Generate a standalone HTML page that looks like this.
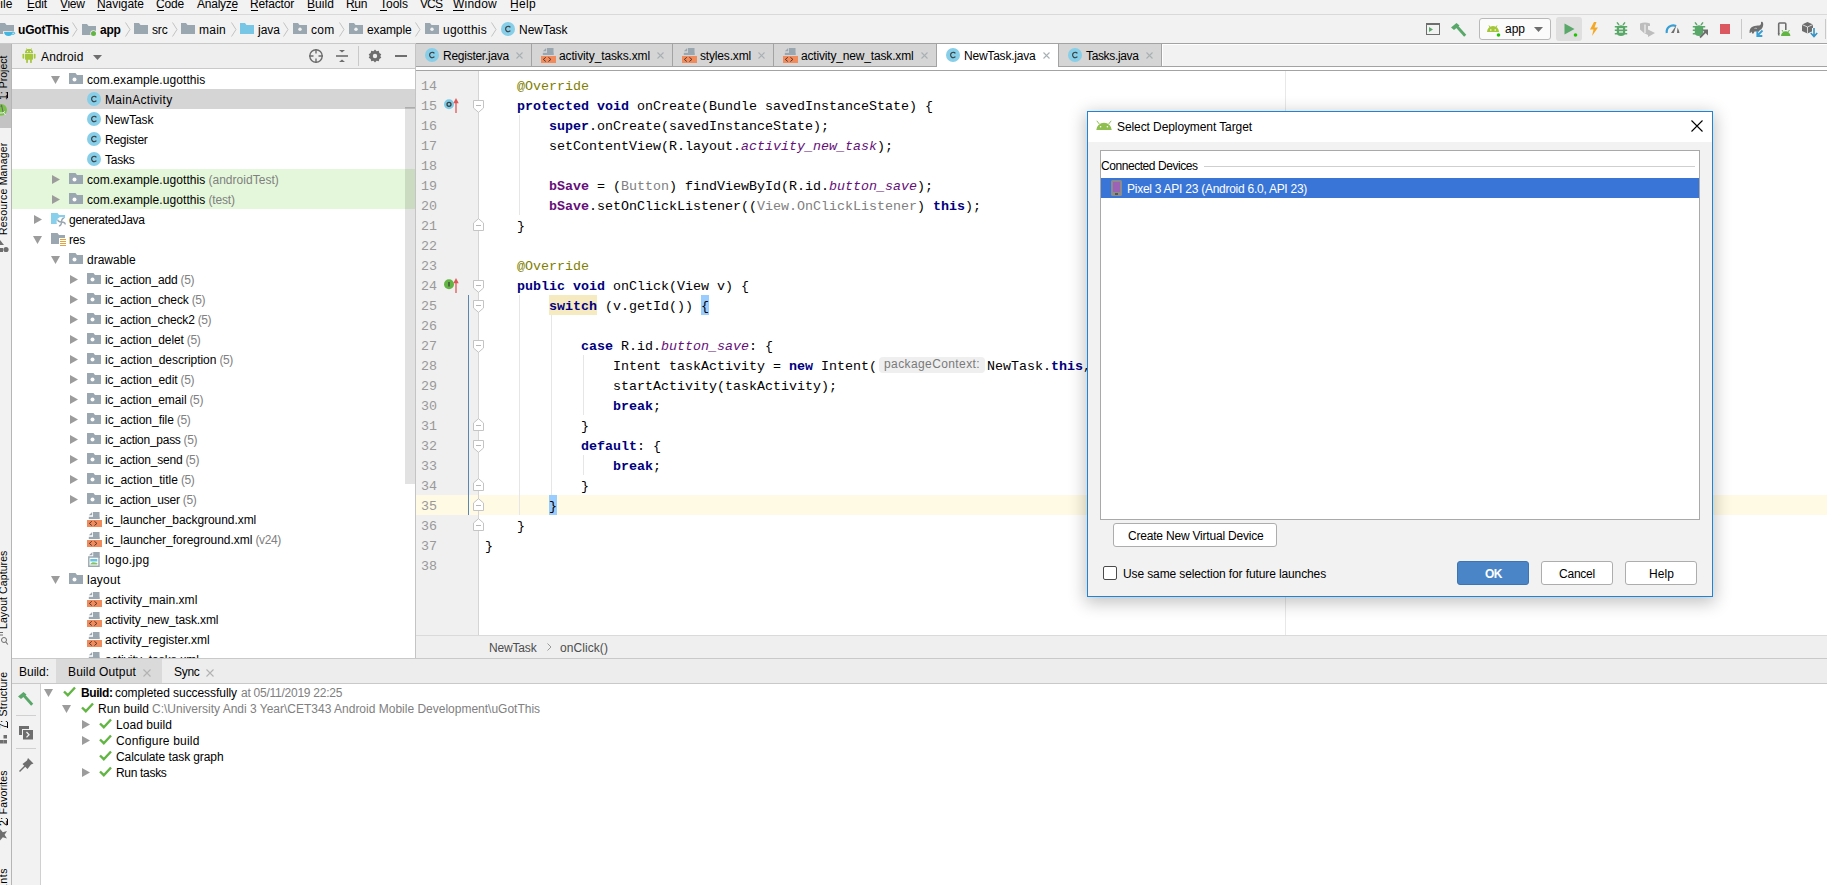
<!DOCTYPE html><html><head><meta charset="utf-8"><style>
*{margin:0;padding:0;box-sizing:border-box}
html,body{width:1827px;height:885px;overflow:hidden;background:#f2f2f2}
body{position:relative;font-family:"Liberation Sans",sans-serif;font-size:12px}
.t{position:absolute;white-space:pre;line-height:20px;font-size:12px}
.r{position:absolute}
.s{position:absolute;overflow:visible}
.code{position:absolute;font-family:"Liberation Mono",monospace;font-size:13.333px;line-height:20px;white-space:pre;color:#000}
</style></head><body><div class="r" style="left:0px;top:0px;width:1827px;height:14px;background:#f2f2f2;"></div><div class="r" style="left:0px;top:14px;width:1827px;height:1px;background:#d9d9d9;"></div><div class="t" style="left:-7px;top:-6px;color:#000;">File</div><div class="t" style="left:27px;top:-6px;color:#000;letter-spacing:-0.168px;">Edit</div><div class="t" style="left:60px;top:-6px;color:#000;letter-spacing:-0.324px;">View</div><div class="t" style="left:97px;top:-6px;color:#000;letter-spacing:-0.045px;">Navigate</div><div class="t" style="left:156px;top:-6px;color:#000;letter-spacing:-0.172px;">Code</div><div class="t" style="left:197px;top:-6px;color:#000;letter-spacing:-0.241px;">Analyze</div><div class="t" style="left:250px;top:-6px;color:#000;letter-spacing:-0.168px;">Refactor</div><div class="t" style="left:307px;top:-6px;color:#000;letter-spacing:0.062px;">Build</div><div class="t" style="left:346px;top:-6px;color:#000;letter-spacing:-0.339px;">Run</div><div class="t" style="left:380px;top:-6px;color:#000;letter-spacing:-0.003px;">Tools</div><div class="t" style="left:420px;top:-6px;color:#000;letter-spacing:-0.891px;">VCS</div><div class="t" style="left:453px;top:-6px;color:#000;letter-spacing:0.219px;">Window</div><div class="t" style="left:510px;top:-6px;color:#000;letter-spacing:0.328px;">Help</div><div class="r" style="left:27px;top:10px;width:6px;height:1px;background:#000;"></div><div class="r" style="left:61px;top:10px;width:7px;height:1px;background:#000;"></div><div class="r" style="left:97px;top:10px;width:8px;height:1px;background:#000;"></div><div class="r" style="left:157px;top:10px;width:7px;height:1px;background:#000;"></div><div class="r" style="left:231px;top:10px;width:6px;height:1px;background:#000;"></div><div class="r" style="left:251px;top:10px;width:7px;height:1px;background:#000;"></div><div class="r" style="left:308px;top:10px;width:7px;height:1px;background:#000;"></div><div class="r" style="left:351px;top:10px;width:6px;height:1px;background:#000;"></div><div class="r" style="left:380px;top:10px;width:7px;height:1px;background:#000;"></div><div class="r" style="left:436px;top:10px;width:7px;height:1px;background:#000;"></div><div class="r" style="left:453px;top:10px;width:11px;height:1px;background:#000;"></div><div class="r" style="left:511px;top:10px;width:7px;height:1px;background:#000;"></div><div class="r" style="left:0px;top:15px;width:1827px;height:28px;background:#f2f2f2;"></div><div class="r" style="left:0px;top:43px;width:1827px;height:1px;background:#c9c9c9;"></div><svg class="s" style="left:0px;top:23px;" width="16" height="14" viewBox="0 0 16 14"><path d="M0 0 H5 L6.5 2 H14 V11 H0 Z" fill="#9aa7b0"/><path d="M3 8.3 H15 V11 H13 Q12 13.5 9 13.5 H7 Q4 13.5 3 10 Z" fill="#f2f2f2"/><path d="M4 9 H12.5 Q12.5 13 8.5 13 Q4.5 13 4 9 Z" fill="#40b6e0"/><ellipse cx="13" cy="10.2" rx="1.8" ry="1.1" fill="none" stroke="#40b6e0" stroke-width="1"/></svg><div class="t" style="left:18px;top:20px;color:#000;font-weight:bold;letter-spacing:-0.205px;">uGotThis</div><svg class="s" style="left:72px;top:22px;" width="6" height="15" viewBox="0 0 6 15"><path d="M0.5 0.5 L5 7.5 L0.5 14.5" fill="none" stroke="#c3c3c3" stroke-width="1"/></svg><svg class="s" style="left:82px;top:24px;" width="16" height="14" viewBox="0 0 16 14"><path d="M0 0 H5 L6.5 2 H14 V11 H0 Z" fill="#9aa7b0"/><circle cx="11.5" cy="9.5" r="3.2" fill="#f2f2f2"/><circle cx="11.5" cy="9.5" r="2.5" fill="#62b543"/></svg><div class="t" style="left:100px;top:20px;color:#000;font-weight:bold;letter-spacing:-0.276px;">app</div><svg class="s" style="left:125px;top:22px;" width="6" height="15" viewBox="0 0 6 15"><path d="M0.5 0.5 L5 7.5 L0.5 14.5" fill="none" stroke="#c3c3c3" stroke-width="1"/></svg><svg class="s" style="left:134px;top:23px;" width="16" height="14" viewBox="0 0 16 14"><path d="M0 0 H5 L6.5 2 H14 V11 H0 Z" fill="#9aa7b0"/></svg><div class="t" style="left:152px;top:20px;color:#000;letter-spacing:-0.167px;">src</div><svg class="s" style="left:172px;top:22px;" width="6" height="15" viewBox="0 0 6 15"><path d="M0.5 0.5 L5 7.5 L0.5 14.5" fill="none" stroke="#c3c3c3" stroke-width="1"/></svg><svg class="s" style="left:181px;top:23px;" width="16" height="14" viewBox="0 0 16 14"><path d="M0 0 H5 L6.5 2 H14 V11 H0 Z" fill="#9aa7b0"/></svg><div class="t" style="left:199px;top:20px;color:#000;letter-spacing:0.246px;">main</div><svg class="s" style="left:231px;top:22px;" width="6" height="15" viewBox="0 0 6 15"><path d="M0.5 0.5 L5 7.5 L0.5 14.5" fill="none" stroke="#c3c3c3" stroke-width="1"/></svg><svg class="s" style="left:240px;top:23px;" width="16" height="14" viewBox="0 0 16 14"><path d="M0 0 H5 L6.5 2 H14 V11 H0 Z" fill="#78c6e6"/></svg><div class="t" style="left:258px;top:20px;color:#000;letter-spacing:-0.004px;">java</div><svg class="s" style="left:283px;top:22px;" width="6" height="15" viewBox="0 0 6 15"><path d="M0.5 0.5 L5 7.5 L0.5 14.5" fill="none" stroke="#c3c3c3" stroke-width="1"/></svg><svg class="s" style="left:293px;top:23px;" width="16" height="14" viewBox="0 0 16 14"><path d="M0 0 H5 L6.5 2 H14 V11 H0 Z" fill="#9aa7b0"/><circle cx="7" cy="6.3" r="1.7" fill="#f2f2f2"/></svg><div class="t" style="left:311px;top:20px;color:#000;letter-spacing:0.276px;">com</div><svg class="s" style="left:339px;top:22px;" width="6" height="15" viewBox="0 0 6 15"><path d="M0.5 0.5 L5 7.5 L0.5 14.5" fill="none" stroke="#c3c3c3" stroke-width="1"/></svg><svg class="s" style="left:349px;top:23px;" width="16" height="14" viewBox="0 0 16 14"><path d="M0 0 H5 L6.5 2 H14 V11 H0 Z" fill="#9aa7b0"/><circle cx="7" cy="6.3" r="1.7" fill="#f2f2f2"/></svg><div class="t" style="left:367px;top:20px;color:#000;letter-spacing:-0.123px;">example</div><svg class="s" style="left:415px;top:22px;" width="6" height="15" viewBox="0 0 6 15"><path d="M0.5 0.5 L5 7.5 L0.5 14.5" fill="none" stroke="#c3c3c3" stroke-width="1"/></svg><svg class="s" style="left:425px;top:23px;" width="16" height="14" viewBox="0 0 16 14"><path d="M0 0 H5 L6.5 2 H14 V11 H0 Z" fill="#9aa7b0"/><circle cx="7" cy="6.3" r="1.7" fill="#f2f2f2"/></svg><div class="t" style="left:443px;top:20px;color:#000;letter-spacing:0.248px;">ugotthis</div><svg class="s" style="left:491px;top:22px;" width="6" height="15" viewBox="0 0 6 15"><path d="M0.5 0.5 L5 7.5 L0.5 14.5" fill="none" stroke="#c3c3c3" stroke-width="1"/></svg><svg class="s" style="left:501px;top:22px;" width="14" height="14" viewBox="0 0 14 14"><circle cx="7" cy="7" r="7" fill="#87cee8"/><path d="M9.4 5.3 A2.7 2.7 0 1 0 9.4 8.7" fill="none" stroke="#3a4245" stroke-width="1.15"/></svg><div class="t" style="left:519px;top:20px;color:#000;letter-spacing:-0.027px;">NewTask</div><svg class="s" style="left:1426px;top:23px;" width="14" height="12" viewBox="0 0 14 12"><rect x="0.5" y="0.5" width="13" height="11" fill="none" stroke="#6e6e6e"/><rect x="0" y="0" width="14" height="2" fill="#6e6e6e"/><path d="M3 4 L7 6.5 L3 9 Z" fill="#59a869"/></svg><svg class="s" style="left:1450px;top:22px;" width="17" height="16" viewBox="0 0 17 16"><path d="M1 5.5 L6.5 1 L9.5 3.5 L4 8 Z" fill="#59a869"/><path d="M6 3.5 L15.2 13.8" stroke="#59a869" stroke-width="2.8"/></svg><div class="r" style="left:1479px;top:18px;width:72px;height:22px;background:#fbfbfb;border:1px solid #b9b9b9;border-radius:3px;"></div><svg class="s" style="left:1486px;top:24px;" width="14" height="13" viewBox="0 0 14 13"><path d="M1 8 A6 6 0 0 1 13 8 Z" fill="#a4c639"/><path d="M3 1.5 L4.5 4 M11 1.5 L9.5 4" stroke="#a4c639" stroke-width="1"/><circle cx="4.8" cy="6" r="0.8" fill="#fff"/><circle cx="9.2" cy="6" r="0.8" fill="#fff"/><circle cx="12.5" cy="11" r="2.2" fill="#fbfbfb"/><circle cx="12.5" cy="11" r="1.8" fill="#21c400"/></svg><div class="t" style="left:1505px;top:19px;color:#000;letter-spacing:-0.005px;">app</div><svg class="s" style="left:1534px;top:27px;" width="9" height="5" viewBox="0 0 9 5"><path d="M0 0 H9 L4.5 5 Z" fill="#6e6e6e"/></svg><div class="r" style="left:1556px;top:17px;width:26px;height:24px;background:#dfdfdf;border-radius:3px;"></div><svg class="s" style="left:1564px;top:23px;" width="14" height="14" viewBox="0 0 14 14"><path d="M0.5 0.5 L10.5 6 L0.5 11.5 Z" fill="#59a869"/><circle cx="11.5" cy="12" r="2.2" fill="#dfdfdf"/><circle cx="11.5" cy="12" r="1.8" fill="#21c400"/></svg><svg class="s" style="left:1589px;top:22px;" width="10" height="14" viewBox="0 0 10 14"><path d="M5 0 L1 7.5 H4.5 L3 14 L9 5.5 H5.5 L7.5 0 Z" fill="#f4a825"/></svg><svg class="s" style="left:1614px;top:22px;" width="14" height="14" viewBox="0 0 14 14"><path d="M3 0.3 L5 3 M11 0.3 L9 3" stroke="#59a869" stroke-width="1.4"/><path d="M2.8 5 Q7 1.5 11.2 5 V10.5 Q11 14 7 14 Q3 14 2.8 10.5 Z" fill="#59a869"/><path d="M0.8 4.8 H13.2 M0.8 8.3 H13.2 M0.8 11.8 H13.2" stroke="#59a869" stroke-width="1.5"/><rect x="5" y="6.2" width="4" height="1.3" fill="#f2f2f2"/><rect x="5" y="9.3" width="4" height="1.3" fill="#f2f2f2"/></svg><svg class="s" style="left:1640px;top:22px;" width="16" height="15" viewBox="0 0 16 15"><path d="M0 1.5 Q5 -0.5 10 1.5 V4 H8 V13 Q3 11 0 7.5 Z" fill="#bdbdbd"/><path d="M5 2.5 V11" stroke="#f2f2f2" stroke-width="1.2"/><path d="M8 7.5 L15 11 L8 15 Z" fill="#bdbdbd"/></svg><svg class="s" style="left:1665px;top:23px;" width="16" height="11" viewBox="0 0 16 11"><path d="M1.8 10 A6.5 6.5 0 0 1 11 3" fill="none" stroke="#389fd6" stroke-width="2.2"/><path d="M6 10 L11.5 2 L8.8 10 Z" fill="#6e6e6e"/><path d="M12.5 4.5 Q14 7 14.5 10 H12 Z" fill="#6e6e6e"/></svg><svg class="s" style="left:1692px;top:22px;" width="16" height="16" viewBox="0 0 16 16"><path d="M3 0.3 L5 3 M11 0.3 L9 3" stroke="#59a869" stroke-width="1.4"/><path d="M2.8 5 Q7 1.5 11.2 5 V10.5 Q11 14 7 14 Q3 14 2.8 10.5 Z" fill="#59a869"/><path d="M0.8 4.8 H13.2 M0.8 8.3 H10 M0.8 11.8 H6" stroke="#59a869" stroke-width="1.5"/><path d="M6.5 16 L14 8.5 L16 8.5 L16 16 Z" fill="#f2f2f2"/><path d="M8 15.5 L14.3 9.2" stroke="#6e6e6e" stroke-width="1.8"/><path d="M10 7.5 H16 V13.5 Z" fill="#6e6e6e"/></svg><div class="r" style="left:1720px;top:24px;width:10px;height:10px;background:#db5860;"></div><div class="r" style="left:1741px;top:19px;width:1px;height:20px;background:#c9c9c9;"></div><svg class="s" style="left:1749px;top:21px;" width="17" height="17" viewBox="0 0 17 17"><path d="M0.5 12 C0.3 8 2 6 4 5.5 C6 4.5 8.5 4.5 10 4.5 C11.5 4.5 12.3 3 12 1.5 C11.8 0.6 12.8 0.4 13.5 1 C14.6 2 14.4 4.5 13.5 6.5 C12.5 8.5 11 9.5 10.5 11 L9.5 12.5 H8 V10.5 H5.5 L4.5 12.5 H3 L3 10.5 C2.5 11 1.8 12 0.5 12 Z" fill="#6e6e6e"/><path d="M5.5 7.5 C6.5 7 7.5 7.2 8 7.8" stroke="#f2f2f2" stroke-width="0.6" fill="none"/><path d="M7.5 15.5 L13 10" stroke="#f2f2f2" stroke-width="4"/><path d="M8.5 14.5 L13.5 9.5 M8.3 10 V15 H13.3" fill="none" stroke="#389fd6" stroke-width="1.8"/></svg><svg class="s" style="left:1777px;top:22px;" width="15" height="15" viewBox="0 0 15 15"><path d="M1.7 12 V2 Q1.7 1 2.7 1 H7.8 Q8.8 1 8.8 2 V8" fill="none" stroke="#6e6e6e" stroke-width="1.6"/><path d="M1.7 11 V12.5 Q1.7 13 2.5 13" fill="none" stroke="#6e6e6e" stroke-width="1.6"/><path d="M3.5 14.5 A5.2 5.2 0 0 1 13.9 14.5 Z" fill="#f2f2f2" stroke="#f2f2f2" stroke-width="1.5"/><path d="M4 14 A4.7 4.7 0 0 1 13.4 14 Z" fill="#62b543"/><path d="M5 8 L6 9.8 M12.4 8 L11.4 9.8" stroke="#62b543" stroke-width="1"/></svg><svg class="s" style="left:1802px;top:22px;" width="16" height="16" viewBox="0 0 16 16"><path d="M5.5 0 L11 2.5 V9 L5.5 11.5 L0 9 V2.5 Z" fill="#6e6e6e"/><path d="M0 2.5 L5.5 5 L11 2.5 M5.5 5 V11.5" stroke="#f2f2f2" stroke-width="0.8" fill="none"/><path d="M12 6 V14" stroke="#f2f2f2" stroke-width="4"/><path d="M12 6 V14 M8.8 11 L12 14.5 L15.2 11" fill="none" stroke="#3592c4" stroke-width="1.6"/></svg><div class="r" style="left:1825px;top:19px;width:1px;height:20px;background:#c9c9c9;"></div><div class="r" style="left:0px;top:44px;width:11px;height:841px;background:#f2f2f2;"></div><div class="r" style="left:11px;top:44px;width:1px;height:841px;background:#b5b5b5;"></div><div class="r" style="left:0px;top:44px;width:11px;height:84px;background:#c3c3c3;"></div><div class="t" style="left:-4px;top:100px;font-size:10.5px;line-height:14px;color:#000;transform-origin:0 0;transform:rotate(-90deg);letter-spacing:0.013px;">1: Project</div><div class="r" style="left:7px;top:92px;width:1px;height:6px;background:#000;"></div><svg class="s" style="left:0px;top:103px;" width="8" height="14" viewBox="0 0 8 14"><circle cx="1.2" cy="6.8" r="5.8" fill="#78c247"/><path d="M1 4 L1.5 2 L2 4 L3 9" stroke="#6a6a6a" stroke-width="1.1" fill="none"/><path d="M0 10 Q3 10.5 5 8.5 M3.5 9.5 L5.5 12" stroke="#f0f0f0" stroke-width="1" fill="none"/></svg><div class="t" style="left:-4px;top:235px;font-size:10.5px;line-height:14px;color:#000;transform-origin:0 0;transform:rotate(-90deg);letter-spacing:0.197px;">Resource Manager</div><svg class="s" style="left:0px;top:240px;" width="9" height="13" viewBox="0 0 9 13"><path d="M0 0 L4 5 H0 Z" fill="#6e6e6e"/><circle cx="6" cy="9.5" r="2.6" fill="#6e6e6e"/><rect x="0" y="8" width="3" height="4" fill="#6e6e6e"/></svg><div class="t" style="left:-4px;top:629px;font-size:10.5px;line-height:14px;color:#000;transform-origin:0 0;transform:rotate(-90deg);letter-spacing:0.094px;">Layout Captures</div><svg class="s" style="left:0px;top:632px;" width="8" height="13" viewBox="0 0 8 13"><path d="M0 0.5 H3 M0 3 H3" stroke="#6e6e6e" stroke-width="1"/><circle cx="4" cy="8" r="2.5" fill="none" stroke="#6e6e6e" stroke-width="1"/><path d="M5.8 10 L7.8 12.5" stroke="#6e6e6e" stroke-width="1.2"/></svg><div class="t" style="left:-4px;top:729px;font-size:10.5px;line-height:14px;color:#000;transform-origin:0 0;transform:rotate(-90deg);letter-spacing:0.266px;">7: Structure</div><div class="r" style="left:7px;top:722px;width:1px;height:6px;background:#000;"></div><svg class="s" style="left:0px;top:735px;" width="8" height="9" viewBox="0 0 8 9"><rect x="3.5" y="0" width="3.5" height="3.5" fill="#6e6e6e"/><rect x="0" y="5" width="3.5" height="3.5" fill="#6e6e6e"/><rect x="3.5" y="5" width="3.5" height="3.5" fill="#6e6e6e"/></svg><div class="t" style="left:-4px;top:826px;font-size:10.5px;line-height:14px;color:#000;transform-origin:0 0;transform:rotate(-90deg);letter-spacing:0.052px;">2: Favorites</div><div class="r" style="left:7px;top:819px;width:1px;height:6px;background:#000;"></div><svg class="s" style="left:-4px;top:829px;" width="12" height="12" viewBox="0 0 12 12"><path d="M5.8 0 L7.4 4 L11.6 4.1 L8.3 6.8 L9.5 11 L5.8 8.6 L2.1 11 L3.3 6.8 L0 4.1 L4.2 4 Z" transform="rotate(-90 5.8 5.8)" fill="#6e6e6e"/></svg><div class="t" style="left:-4px;top:940px;font-size:10.5px;line-height:14px;color:#000;transform-origin:0 0;transform:rotate(-90deg);letter-spacing:0.570px;">Build Variants</div><div class="r" style="left:12px;top:44px;width:403px;height:24px;background:#eeeeee;"></div><div class="r" style="left:12px;top:68px;width:403px;height:1px;background:#c9c9c9;"></div><div class="r" style="left:415px;top:44px;width:1px;height:615px;background:#c4c4c4;"></div><div class="r" style="left:12px;top:69px;width:403px;height:589px;background:#ffffff;"></div><svg class="s" style="left:22px;top:48px;" width="14" height="15" viewBox="0 0 14 15"><path d="M3 5 A4 4 0 0 1 11 5 Z" fill="#a4c639"/><path d="M4.5 0.5 L5.3 2.2 M9.5 0.5 L8.7 2.2" stroke="#a4c639" stroke-width="0.9"/><circle cx="5.6" cy="3.6" r="0.6" fill="#fff"/><circle cx="8.4" cy="3.6" r="0.6" fill="#fff"/><rect x="3" y="5.7" width="8" height="6" rx="0.6" fill="#a4c639"/><rect x="0.5" y="5.7" width="1.7" height="5" rx="0.85" fill="#a4c639"/><rect x="11.8" y="5.7" width="1.7" height="5" rx="0.85" fill="#a4c639"/><rect x="4.2" y="11" width="1.7" height="4" rx="0.85" fill="#a4c639"/><rect x="8.1" y="11" width="1.7" height="4" rx="0.85" fill="#a4c639"/></svg><div class="t" style="left:41px;top:47px;color:#000;letter-spacing:0.163px;">Android</div><svg class="s" style="left:93px;top:55px;" width="9" height="5" viewBox="0 0 9 5"><path d="M0 0 H9 L4.5 5 Z" fill="#6e6e6e"/></svg><svg class="s" style="left:309px;top:49px;" width="14" height="14" viewBox="0 0 14 14"><circle cx="7" cy="7" r="6.2" fill="none" stroke="#6e6e6e" stroke-width="1.4"/><path d="M7 0 V4.5 M7 9.5 V14 M0 7 H4.5 M9.5 7 H14" stroke="#6e6e6e" stroke-width="1.4"/></svg><svg class="s" style="left:336px;top:50px;" width="12" height="12" viewBox="0 0 12 12"><path d="M3 0 H9 L6 2.5 Z M3 12 H9 L6 9.5 Z" fill="#6e6e6e"/><rect x="0" y="5.2" width="12" height="1.6" fill="#6e6e6e"/></svg><div class="r" style="left:358px;top:46px;width:1px;height:20px;background:#c9c9c9;"></div><svg class="s" style="left:368px;top:49px;" width="14" height="14" viewBox="0 0 14 14"><path d="M7 0.5 L8.6 2.2 L10.8 1.8 L11.3 4 L13.3 5.2 L12.3 7 L13.3 8.8 L11.3 10 L10.8 12.2 L8.6 11.8 L7 13.5 L5.4 11.8 L3.2 12.2 L2.7 10 L0.7 8.8 L1.7 7 L0.7 5.2 L2.7 4 L3.2 1.8 L5.4 2.2 Z" fill="#6e6e6e"/><circle cx="7" cy="7" r="2.2" fill="#eeeeee"/></svg><div class="r" style="left:395px;top:55px;width:12px;height:2px;background:#6e6e6e;"></div><svg class="s" style="left:51px;top:76px;" width="9" height="8" viewBox="0 0 9 8"><path d="M0 0 H9 L4.5 8 Z" fill="#9c9c9c"/></svg><svg class="s" style="left:69px;top:73px;" width="14" height="11" viewBox="0 0 14 11"><path d="M0 0 H6.5 L8 2 H14 V11 H0 Z" fill="#9aa7b0"/><circle cx="5.5" cy="6.5" r="2" fill="#fff"/></svg><div class="t" style="left:87px;top:70px;color:#000;letter-spacing:0.085px;">com.example.ugotthis</div><div class="r" style="left:12px;top:89px;width:403px;height:20px;background:#d5d5d5;"></div><svg class="s" style="left:87px;top:92px;" width="14" height="14" viewBox="0 0 14 14"><circle cx="7" cy="7" r="7" fill="#87cee8"/><path d="M9.4 5.3 A2.7 2.7 0 1 0 9.4 8.7" fill="none" stroke="#3a4245" stroke-width="1.15"/></svg><div class="t" style="left:105px;top:90px;color:#000;letter-spacing:0.290px;">MainActivity</div><svg class="s" style="left:87px;top:112px;" width="14" height="14" viewBox="0 0 14 14"><circle cx="7" cy="7" r="7" fill="#87cee8"/><path d="M9.4 5.3 A2.7 2.7 0 1 0 9.4 8.7" fill="none" stroke="#3a4245" stroke-width="1.15"/></svg><div class="t" style="left:105px;top:110px;color:#000;letter-spacing:-0.012px;">NewTask</div><svg class="s" style="left:87px;top:132px;" width="14" height="14" viewBox="0 0 14 14"><circle cx="7" cy="7" r="7" fill="#87cee8"/><path d="M9.4 5.3 A2.7 2.7 0 1 0 9.4 8.7" fill="none" stroke="#3a4245" stroke-width="1.15"/></svg><div class="t" style="left:105px;top:130px;color:#000;letter-spacing:-0.261px;">Register</div><svg class="s" style="left:87px;top:152px;" width="14" height="14" viewBox="0 0 14 14"><circle cx="7" cy="7" r="7" fill="#87cee8"/><path d="M9.4 5.3 A2.7 2.7 0 1 0 9.4 8.7" fill="none" stroke="#3a4245" stroke-width="1.15"/></svg><div class="t" style="left:105px;top:150px;color:#000;letter-spacing:-0.234px;">Tasks</div><div class="r" style="left:12px;top:169px;width:403px;height:20px;background:#e4f7da;"></div><svg class="s" style="left:52px;top:175px;" width="8" height="9" viewBox="0 0 8 9"><path d="M0 0 L8 4.5 L0 9 Z" fill="#9c9c9c"/></svg><svg class="s" style="left:69px;top:173px;" width="14" height="11" viewBox="0 0 14 11"><path d="M0 0 H6.5 L8 2 H14 V11 H0 Z" fill="#9aa7b0"/><circle cx="5.5" cy="6.5" r="2" fill="#fff"/></svg><div class="t" style="left:87px;top:170px;color:#000;letter-spacing:0.085px;">com.example.ugotthis</div><div class="t" style="left:208.4px;top:170px;color:#808080;letter-spacing:0.036px;">(androidTest)</div><div class="r" style="left:12px;top:189px;width:403px;height:20px;background:#e4f7da;"></div><svg class="s" style="left:52px;top:195px;" width="8" height="9" viewBox="0 0 8 9"><path d="M0 0 L8 4.5 L0 9 Z" fill="#9c9c9c"/></svg><svg class="s" style="left:69px;top:193px;" width="14" height="11" viewBox="0 0 14 11"><path d="M0 0 H6.5 L8 2 H14 V11 H0 Z" fill="#9aa7b0"/><circle cx="5.5" cy="6.5" r="2" fill="#fff"/></svg><div class="t" style="left:87px;top:190px;color:#000;letter-spacing:0.085px;">com.example.ugotthis</div><div class="t" style="left:208.4px;top:190px;color:#808080;letter-spacing:-0.138px;">(test)</div><svg class="s" style="left:34px;top:215px;" width="8" height="9" viewBox="0 0 8 9"><path d="M0 0 L8 4.5 L0 9 Z" fill="#9c9c9c"/></svg><svg class="s" style="left:51px;top:213px;" width="16" height="15" viewBox="0 0 16 15"><path d="M0 0 H6.5 L8 2 H14 V11 H0 Z" fill="#87cfea"/><circle cx="10.5" cy="9" r="5" fill="#fff"/><path d="M10.5 9 C10.5 6 12 5 13 5.5 M10.5 9 C13.5 9 14.5 10.5 14 11.5 M10.5 9 C10.5 12 9 13 8 12.5 M10.5 9 C7.5 9 6.5 7.5 7 6.5" fill="none" stroke="#9aa7b0" stroke-width="1.5"/></svg><div class="t" style="left:69px;top:210px;color:#000;letter-spacing:-0.290px;">generatedJava</div><svg class="s" style="left:33px;top:236px;" width="9" height="8" viewBox="0 0 9 8"><path d="M0 0 H9 L4.5 8 Z" fill="#9c9c9c"/></svg><svg class="s" style="left:51px;top:233px;" width="16" height="15" viewBox="0 0 16 15"><path d="M0 0 H6.5 L8 2 H14 V11 H0 Z" fill="#9aa7b0"/><rect x="8" y="5" width="8" height="10" fill="#fff"/><path d="M9 6.5 H15 M9 8.5 H15 M9 10.5 H15 M9 12.5 H15" stroke="#e3a23b" stroke-width="1"/></svg><div class="t" style="left:69px;top:230px;color:#000;letter-spacing:-0.224px;">res</div><svg class="s" style="left:51px;top:256px;" width="9" height="8" viewBox="0 0 9 8"><path d="M0 0 H9 L4.5 8 Z" fill="#9c9c9c"/></svg><svg class="s" style="left:69px;top:253px;" width="14" height="11" viewBox="0 0 14 11"><path d="M0 0 H6.5 L8 2 H14 V11 H0 Z" fill="#9aa7b0"/><circle cx="5.5" cy="6.5" r="2" fill="#fff"/></svg><div class="t" style="left:87px;top:250px;color:#000;letter-spacing:-0.000px;">drawable</div><svg class="s" style="left:70px;top:275px;" width="8" height="9" viewBox="0 0 8 9"><path d="M0 0 L8 4.5 L0 9 Z" fill="#9c9c9c"/></svg><svg class="s" style="left:87px;top:273px;" width="14" height="11" viewBox="0 0 14 11"><path d="M0 0 H6.5 L8 2 H14 V11 H0 Z" fill="#9aa7b0"/><circle cx="5.5" cy="6.5" r="2" fill="#fff"/></svg><div class="t" style="left:105px;top:270px;color:#000;letter-spacing:-0.111px;">ic_action_add</div><div class="t" style="left:180.6px;top:270px;color:#808080;letter-spacing:-0.391px;">(5)</div><svg class="s" style="left:70px;top:295px;" width="8" height="9" viewBox="0 0 8 9"><path d="M0 0 L8 4.5 L0 9 Z" fill="#9c9c9c"/></svg><svg class="s" style="left:87px;top:293px;" width="14" height="11" viewBox="0 0 14 11"><path d="M0 0 H6.5 L8 2 H14 V11 H0 Z" fill="#9aa7b0"/><circle cx="5.5" cy="6.5" r="2" fill="#fff"/></svg><div class="t" style="left:105px;top:290px;color:#000;letter-spacing:-0.112px;">ic_action_check</div><div class="t" style="left:191.7px;top:290px;color:#808080;letter-spacing:-0.391px;">(5)</div><svg class="s" style="left:70px;top:315px;" width="8" height="9" viewBox="0 0 8 9"><path d="M0 0 L8 4.5 L0 9 Z" fill="#9c9c9c"/></svg><svg class="s" style="left:87px;top:313px;" width="14" height="11" viewBox="0 0 14 11"><path d="M0 0 H6.5 L8 2 H14 V11 H0 Z" fill="#9aa7b0"/><circle cx="5.5" cy="6.5" r="2" fill="#fff"/></svg><div class="t" style="left:105px;top:310px;color:#000;letter-spacing:-0.147px;">ic_action_check2</div><div class="t" style="left:197.7px;top:310px;color:#808080;letter-spacing:-0.391px;">(5)</div><svg class="s" style="left:70px;top:335px;" width="8" height="9" viewBox="0 0 8 9"><path d="M0 0 L8 4.5 L0 9 Z" fill="#9c9c9c"/></svg><svg class="s" style="left:87px;top:333px;" width="14" height="11" viewBox="0 0 14 11"><path d="M0 0 H6.5 L8 2 H14 V11 H0 Z" fill="#9aa7b0"/><circle cx="5.5" cy="6.5" r="2" fill="#fff"/></svg><div class="t" style="left:105px;top:330px;color:#000;letter-spacing:-0.083px;">ic_action_delet</div><div class="t" style="left:186.8px;top:330px;color:#808080;letter-spacing:-0.391px;">(5)</div><svg class="s" style="left:70px;top:355px;" width="8" height="9" viewBox="0 0 8 9"><path d="M0 0 L8 4.5 L0 9 Z" fill="#9c9c9c"/></svg><svg class="s" style="left:87px;top:353px;" width="14" height="11" viewBox="0 0 14 11"><path d="M0 0 H6.5 L8 2 H14 V11 H0 Z" fill="#9aa7b0"/><circle cx="5.5" cy="6.5" r="2" fill="#fff"/></svg><div class="t" style="left:105px;top:350px;color:#000;letter-spacing:-0.032px;">ic_action_description</div><div class="t" style="left:219.4px;top:350px;color:#808080;letter-spacing:-0.391px;">(5)</div><svg class="s" style="left:70px;top:375px;" width="8" height="9" viewBox="0 0 8 9"><path d="M0 0 L8 4.5 L0 9 Z" fill="#9c9c9c"/></svg><svg class="s" style="left:87px;top:373px;" width="14" height="11" viewBox="0 0 14 11"><path d="M0 0 H6.5 L8 2 H14 V11 H0 Z" fill="#9aa7b0"/><circle cx="5.5" cy="6.5" r="2" fill="#fff"/></svg><div class="t" style="left:105px;top:370px;color:#000;letter-spacing:-0.055px;">ic_action_edit</div><div class="t" style="left:180.6px;top:370px;color:#808080;letter-spacing:-0.391px;">(5)</div><svg class="s" style="left:70px;top:395px;" width="8" height="9" viewBox="0 0 8 9"><path d="M0 0 L8 4.5 L0 9 Z" fill="#9c9c9c"/></svg><svg class="s" style="left:87px;top:393px;" width="14" height="11" viewBox="0 0 14 11"><path d="M0 0 H6.5 L8 2 H14 V11 H0 Z" fill="#9aa7b0"/><circle cx="5.5" cy="6.5" r="2" fill="#fff"/></svg><div class="t" style="left:105px;top:390px;color:#000;letter-spacing:-0.081px;">ic_action_email</div><div class="t" style="left:189.5px;top:390px;color:#808080;letter-spacing:-0.391px;">(5)</div><svg class="s" style="left:70px;top:415px;" width="8" height="9" viewBox="0 0 8 9"><path d="M0 0 L8 4.5 L0 9 Z" fill="#9c9c9c"/></svg><svg class="s" style="left:87px;top:413px;" width="14" height="11" viewBox="0 0 14 11"><path d="M0 0 H6.5 L8 2 H14 V11 H0 Z" fill="#9aa7b0"/><circle cx="5.5" cy="6.5" r="2" fill="#fff"/></svg><div class="t" style="left:105px;top:410px;color:#000;letter-spacing:-0.041px;">ic_action_file</div><div class="t" style="left:176.8px;top:410px;color:#808080;letter-spacing:-0.391px;">(5)</div><svg class="s" style="left:70px;top:435px;" width="8" height="9" viewBox="0 0 8 9"><path d="M0 0 L8 4.5 L0 9 Z" fill="#9c9c9c"/></svg><svg class="s" style="left:87px;top:433px;" width="14" height="11" viewBox="0 0 14 11"><path d="M0 0 H6.5 L8 2 H14 V11 H0 Z" fill="#9aa7b0"/><circle cx="5.5" cy="6.5" r="2" fill="#fff"/></svg><div class="t" style="left:105px;top:430px;color:#000;letter-spacing:-0.270px;">ic_action_pass</div><div class="t" style="left:183.6px;top:430px;color:#808080;letter-spacing:-0.391px;">(5)</div><svg class="s" style="left:70px;top:455px;" width="8" height="9" viewBox="0 0 8 9"><path d="M0 0 L8 4.5 L0 9 Z" fill="#9c9c9c"/></svg><svg class="s" style="left:87px;top:453px;" width="14" height="11" viewBox="0 0 14 11"><path d="M0 0 H6.5 L8 2 H14 V11 H0 Z" fill="#9aa7b0"/><circle cx="5.5" cy="6.5" r="2" fill="#fff"/></svg><div class="t" style="left:105px;top:450px;color:#000;letter-spacing:-0.182px;">ic_action_send</div><div class="t" style="left:185.5px;top:450px;color:#808080;letter-spacing:-0.391px;">(5)</div><svg class="s" style="left:70px;top:475px;" width="8" height="9" viewBox="0 0 8 9"><path d="M0 0 L8 4.5 L0 9 Z" fill="#9c9c9c"/></svg><svg class="s" style="left:87px;top:473px;" width="14" height="11" viewBox="0 0 14 11"><path d="M0 0 H6.5 L8 2 H14 V11 H0 Z" fill="#9aa7b0"/><circle cx="5.5" cy="6.5" r="2" fill="#fff"/></svg><div class="t" style="left:105px;top:470px;color:#000;letter-spacing:0.013px;">ic_action_title</div><div class="t" style="left:180.9px;top:470px;color:#808080;letter-spacing:-0.391px;">(5)</div><svg class="s" style="left:70px;top:495px;" width="8" height="9" viewBox="0 0 8 9"><path d="M0 0 L8 4.5 L0 9 Z" fill="#9c9c9c"/></svg><svg class="s" style="left:87px;top:493px;" width="14" height="11" viewBox="0 0 14 11"><path d="M0 0 H6.5 L8 2 H14 V11 H0 Z" fill="#9aa7b0"/><circle cx="5.5" cy="6.5" r="2" fill="#fff"/></svg><div class="t" style="left:105px;top:490px;color:#000;letter-spacing:-0.184px;">ic_action_user</div><div class="t" style="left:182.8px;top:490px;color:#808080;letter-spacing:-0.391px;">(5)</div><svg class="s" style="left:87px;top:512px;" width="15" height="15" viewBox="0 0 15 15"><path d="M1.8 3.3 L5.2 0 V3.3 Z" fill="#9aa7b0"/><rect x="6" y="0" width="6.5" height="7" fill="#9aa7b0"/><rect x="1.8" y="4.8" width="10.7" height="2.2" fill="#9aa7b0"/><rect x="0" y="8" width="15" height="7" fill="#f28b5c"/><path d="M4.8 9.3 L2.3 11.4 L4.8 13.5 M7.4 9.3 L9.9 11.4 L7.4 13.5" fill="none" stroke="#4a3a33" stroke-width="1"/></svg><div class="t" style="left:105px;top:510px;color:#000;letter-spacing:-0.060px;">ic_launcher_background.xml</div><svg class="s" style="left:87px;top:532px;" width="15" height="15" viewBox="0 0 15 15"><path d="M1.8 3.3 L5.2 0 V3.3 Z" fill="#9aa7b0"/><rect x="6" y="0" width="6.5" height="7" fill="#9aa7b0"/><rect x="1.8" y="4.8" width="10.7" height="2.2" fill="#9aa7b0"/><rect x="0" y="8" width="15" height="7" fill="#f28b5c"/><path d="M4.8 9.3 L2.3 11.4 L4.8 13.5 M7.4 9.3 L9.9 11.4 L7.4 13.5" fill="none" stroke="#4a3a33" stroke-width="1"/></svg><div class="t" style="left:105px;top:530px;color:#000;letter-spacing:-0.026px;">ic_launcher_foreground.xml</div><div class="t" style="left:255.4px;top:530px;color:#808080;letter-spacing:-0.369px;">(v24)</div><svg class="s" style="left:88px;top:552px;" width="12" height="15" viewBox="0 0 12 15"><path d="M1 3.3 L4.4 0 V3.3 Z" fill="#9aa7b0"/><rect x="5.2" y="0" width="6.5" height="6" fill="#9aa7b0"/><path d="M0.8 5 H11 V14.3 H0.8 Z" fill="#fff" stroke="#9aa7b0" stroke-width="1.4"/><rect x="2.3" y="7" width="7" height="2.5" fill="#40b6e0" opacity="0.8"/><path d="M2.3 12 C4 9.5 6 10 9.3 11 V12.5 H2.3 Z" fill="#62b543" opacity="0.8"/></svg><div class="t" style="left:105px;top:550px;color:#000;letter-spacing:0.296px;">logo.jpg</div><svg class="s" style="left:51px;top:576px;" width="9" height="8" viewBox="0 0 9 8"><path d="M0 0 H9 L4.5 8 Z" fill="#9c9c9c"/></svg><svg class="s" style="left:69px;top:573px;" width="14" height="11" viewBox="0 0 14 11"><path d="M0 0 H6.5 L8 2 H14 V11 H0 Z" fill="#9aa7b0"/><circle cx="5.5" cy="6.5" r="2" fill="#fff"/></svg><div class="t" style="left:87px;top:570px;color:#000;letter-spacing:0.247px;">layout</div><svg class="s" style="left:87px;top:592px;" width="15" height="15" viewBox="0 0 15 15"><path d="M1.8 3.3 L5.2 0 V3.3 Z" fill="#9aa7b0"/><rect x="6" y="0" width="6.5" height="7" fill="#9aa7b0"/><rect x="1.8" y="4.8" width="10.7" height="2.2" fill="#9aa7b0"/><rect x="0" y="8" width="15" height="7" fill="#f28b5c"/><path d="M4.8 9.3 L2.3 11.4 L4.8 13.5 M7.4 9.3 L9.9 11.4 L7.4 13.5" fill="none" stroke="#4a3a33" stroke-width="1"/></svg><div class="t" style="left:105px;top:590px;color:#000;letter-spacing:0.061px;">activity_main.xml</div><svg class="s" style="left:87px;top:612px;" width="15" height="15" viewBox="0 0 15 15"><path d="M1.8 3.3 L5.2 0 V3.3 Z" fill="#9aa7b0"/><rect x="6" y="0" width="6.5" height="7" fill="#9aa7b0"/><rect x="1.8" y="4.8" width="10.7" height="2.2" fill="#9aa7b0"/><rect x="0" y="8" width="15" height="7" fill="#f28b5c"/><path d="M4.8 9.3 L2.3 11.4 L4.8 13.5 M7.4 9.3 L9.9 11.4 L7.4 13.5" fill="none" stroke="#4a3a33" stroke-width="1"/></svg><div class="t" style="left:105px;top:610px;color:#000;letter-spacing:-0.130px;">activity_new_task.xml</div><svg class="s" style="left:87px;top:632px;" width="15" height="15" viewBox="0 0 15 15"><path d="M1.8 3.3 L5.2 0 V3.3 Z" fill="#9aa7b0"/><rect x="6" y="0" width="6.5" height="7" fill="#9aa7b0"/><rect x="1.8" y="4.8" width="10.7" height="2.2" fill="#9aa7b0"/><rect x="0" y="8" width="15" height="7" fill="#f28b5c"/><path d="M4.8 9.3 L2.3 11.4 L4.8 13.5 M7.4 9.3 L9.9 11.4 L7.4 13.5" fill="none" stroke="#4a3a33" stroke-width="1"/></svg><div class="t" style="left:105px;top:630px;color:#000;letter-spacing:-0.005px;">activity_register.xml</div><svg class="s" style="left:87px;top:652px;" width="15" height="15" viewBox="0 0 15 15"><path d="M1.8 3.3 L5.2 0 V3.3 Z" fill="#9aa7b0"/><rect x="6" y="0" width="6.5" height="7" fill="#9aa7b0"/><rect x="1.8" y="4.8" width="10.7" height="2.2" fill="#9aa7b0"/><rect x="0" y="8" width="15" height="7" fill="#f28b5c"/><path d="M4.8 9.3 L2.3 11.4 L4.8 13.5 M7.4 9.3 L9.9 11.4 L7.4 13.5" fill="none" stroke="#4a3a33" stroke-width="1"/></svg><div class="t" style="left:105px;top:650px;color:#000;letter-spacing:0.036px;">activity_tasks.xml</div><div class="r" style="left:405px;top:107px;width:10px;height:377px;background:rgba(0,0,0,0.115);border-top:1px solid rgba(0,0,0,0.08)"></div><div class="r" style="left:416px;top:43px;width:1411px;height:1px;background:#a3a3a3;"></div><div class="r" style="left:416px;top:44px;width:1411px;height:23px;background:#f2f2f2;"></div><div class="r" style="left:416px;top:44px;width:115px;height:22px;background:#d5d5d5;"></div><div class="r" style="left:416px;top:66px;width:116px;height:1px;background:#a3a3a3;"></div><div class="r" style="left:531px;top:44px;width:1px;height:23px;background:#a3a3a3;"></div><svg class="s" style="left:425px;top:48px;" width="14" height="14" viewBox="0 0 14 14"><circle cx="7" cy="7" r="7" fill="#87cee8"/><path d="M9.4 5.3 A2.7 2.7 0 1 0 9.4 8.7" fill="none" stroke="#3a4245" stroke-width="1.15"/></svg><div class="t" style="left:443px;top:46px;color:#000;letter-spacing:-0.260px;">Register.java</div><svg class="s" style="left:516px;top:52px;" width="7" height="7" viewBox="0 0 7 7"><path d="M0.5 0.5 L6.5 6.5 M6.5 0.5 L0.5 6.5" stroke="#a9b0b4" stroke-width="1.1"/></svg><div class="r" style="left:532px;top:44px;width:140px;height:22px;background:#d5d5d5;"></div><div class="r" style="left:532px;top:66px;width:141px;height:1px;background:#a3a3a3;"></div><div class="r" style="left:672px;top:44px;width:1px;height:23px;background:#a3a3a3;"></div><svg class="s" style="left:541px;top:48px;" width="15" height="15" viewBox="0 0 15 15"><path d="M1.8 3.3 L5.2 0 V3.3 Z" fill="#9aa7b0"/><rect x="6" y="0" width="6.5" height="7" fill="#9aa7b0"/><rect x="1.8" y="4.8" width="10.7" height="2.2" fill="#9aa7b0"/><rect x="0" y="8" width="15" height="7" fill="#f28b5c"/><path d="M4.8 9.3 L2.3 11.4 L4.8 13.5 M7.4 9.3 L9.9 11.4 L7.4 13.5" fill="none" stroke="#4a3a33" stroke-width="1"/></svg><div class="t" style="left:559px;top:46px;color:#000;letter-spacing:-0.130px;">activity_tasks.xml</div><svg class="s" style="left:657px;top:52px;" width="7" height="7" viewBox="0 0 7 7"><path d="M0.5 0.5 L6.5 6.5 M6.5 0.5 L0.5 6.5" stroke="#a9b0b4" stroke-width="1.1"/></svg><div class="r" style="left:673px;top:44px;width:100px;height:22px;background:#d5d5d5;"></div><div class="r" style="left:673px;top:66px;width:101px;height:1px;background:#a3a3a3;"></div><div class="r" style="left:773px;top:44px;width:1px;height:23px;background:#a3a3a3;"></div><svg class="s" style="left:682px;top:48px;" width="15" height="15" viewBox="0 0 15 15"><path d="M1.8 3.3 L5.2 0 V3.3 Z" fill="#9aa7b0"/><rect x="6" y="0" width="6.5" height="7" fill="#9aa7b0"/><rect x="1.8" y="4.8" width="10.7" height="2.2" fill="#9aa7b0"/><rect x="0" y="8" width="15" height="7" fill="#f28b5c"/><path d="M4.8 9.3 L2.3 11.4 L4.8 13.5 M7.4 9.3 L9.9 11.4 L7.4 13.5" fill="none" stroke="#4a3a33" stroke-width="1"/></svg><div class="t" style="left:700px;top:46px;color:#000;letter-spacing:-0.167px;">styles.xml</div><svg class="s" style="left:758px;top:52px;" width="7" height="7" viewBox="0 0 7 7"><path d="M0.5 0.5 L6.5 6.5 M6.5 0.5 L0.5 6.5" stroke="#a9b0b4" stroke-width="1.1"/></svg><div class="r" style="left:774px;top:44px;width:162px;height:22px;background:#d5d5d5;"></div><div class="r" style="left:774px;top:66px;width:163px;height:1px;background:#a3a3a3;"></div><div class="r" style="left:936px;top:44px;width:1px;height:23px;background:#a3a3a3;"></div><svg class="s" style="left:783px;top:48px;" width="15" height="15" viewBox="0 0 15 15"><path d="M1.8 3.3 L5.2 0 V3.3 Z" fill="#9aa7b0"/><rect x="6" y="0" width="6.5" height="7" fill="#9aa7b0"/><rect x="1.8" y="4.8" width="10.7" height="2.2" fill="#9aa7b0"/><rect x="0" y="8" width="15" height="7" fill="#f28b5c"/><path d="M4.8 9.3 L2.3 11.4 L4.8 13.5 M7.4 9.3 L9.9 11.4 L7.4 13.5" fill="none" stroke="#4a3a33" stroke-width="1"/></svg><div class="t" style="left:801px;top:46px;color:#000;letter-spacing:-0.168px;">activity_new_task.xml</div><svg class="s" style="left:921px;top:52px;" width="7" height="7" viewBox="0 0 7 7"><path d="M0.5 0.5 L6.5 6.5 M6.5 0.5 L0.5 6.5" stroke="#a9b0b4" stroke-width="1.1"/></svg><div class="r" style="left:937px;top:44px;width:121px;height:26px;background:#ffffff;"></div><div class="r" style="left:1058px;top:44px;width:1px;height:23px;background:#a3a3a3;"></div><svg class="s" style="left:946px;top:48px;" width="14" height="14" viewBox="0 0 14 14"><circle cx="7" cy="7" r="7" fill="#87cee8"/><path d="M9.4 5.3 A2.7 2.7 0 1 0 9.4 8.7" fill="none" stroke="#3a4245" stroke-width="1.15"/></svg><div class="t" style="left:964px;top:46px;color:#000;letter-spacing:-0.211px;">NewTask.java</div><svg class="s" style="left:1043px;top:52px;" width="7" height="7" viewBox="0 0 7 7"><path d="M0.5 0.5 L6.5 6.5 M6.5 0.5 L0.5 6.5" stroke="#a9b0b4" stroke-width="1.1"/></svg><div class="r" style="left:1059px;top:44px;width:102px;height:22px;background:#d5d5d5;"></div><div class="r" style="left:1059px;top:66px;width:103px;height:1px;background:#a3a3a3;"></div><div class="r" style="left:1161px;top:44px;width:1px;height:23px;background:#a3a3a3;"></div><svg class="s" style="left:1068px;top:48px;" width="14" height="14" viewBox="0 0 14 14"><circle cx="7" cy="7" r="7" fill="#87cee8"/><path d="M9.4 5.3 A2.7 2.7 0 1 0 9.4 8.7" fill="none" stroke="#3a4245" stroke-width="1.15"/></svg><div class="t" style="left:1086px;top:46px;color:#000;letter-spacing:-0.352px;">Tasks.java</div><svg class="s" style="left:1146px;top:52px;" width="7" height="7" viewBox="0 0 7 7"><path d="M0.5 0.5 L6.5 6.5 M6.5 0.5 L0.5 6.5" stroke="#a9b0b4" stroke-width="1.1"/></svg><div class="r" style="left:1162px;top:44px;width:665px;height:1px;background:#ffffff;"></div><div class="r" style="left:1162px;top:44px;width:1px;height:22px;background:#ffffff;"></div><div class="r" style="left:1162px;top:66px;width:665px;height:1px;background:#a3a3a3;"></div><div class="r" style="left:416px;top:67px;width:1411px;height:3px;background:#ffffff;"></div><div class="r" style="left:416px;top:70px;width:1411px;height:1px;background:#a3a3a3;"></div><div class="r" style="left:416px;top:71px;width:1411px;height:564px;background:#ffffff;"></div><div class="r" style="left:416px;top:71px;width:62px;height:564px;background:#f0f0f0;"></div><div class="r" style="left:479px;top:495px;width:1348px;height:20px;background:#fffae3;"></div><div class="r" style="left:416px;top:495px;width:62px;height:20px;background:#fffae3;"></div><div class="r" style="left:549px;top:295px;width:48px;height:20px;background:#f6eac0;"></div><div class="r" style="left:701px;top:295px;width:8px;height:20px;background:#99ccff;"></div><div class="r" style="left:549px;top:495px;width:8px;height:20px;background:#99ccff;"></div><div class="r" style="left:478px;top:71px;width:1px;height:564px;background:#d5d5d5;"></div><div class="r" style="left:1285px;top:71px;width:1px;height:564px;background:#e8e8e8;"></div><div class="r" style="left:519px;top:115px;width:1px;height:100px;background:#e6e6e6;"></div><div class="r" style="left:519px;top:295px;width:1px;height:220px;background:#e6e6e6;"></div><div class="r" style="left:551px;top:315px;width:1px;height:180px;background:#e6e6e6;"></div><div class="r" style="left:583px;top:355px;width:1px;height:60px;background:#e6e6e6;"></div><div class="r" style="left:583px;top:455px;width:1px;height:20px;background:#e6e6e6;"></div><div class="r" style="left:468px;top:295px;width:1px;height:220px;background:#5a86b4;"></div><div class="code" style="left:416px;top:77px;width:21px;color:#999999"><div style="position:absolute;left:0;top:0px;width:21px;text-align:right">14</div><div style="position:absolute;left:0;top:20px;width:21px;text-align:right">15</div><div style="position:absolute;left:0;top:40px;width:21px;text-align:right">16</div><div style="position:absolute;left:0;top:60px;width:21px;text-align:right">17</div><div style="position:absolute;left:0;top:80px;width:21px;text-align:right">18</div><div style="position:absolute;left:0;top:100px;width:21px;text-align:right">19</div><div style="position:absolute;left:0;top:120px;width:21px;text-align:right">20</div><div style="position:absolute;left:0;top:140px;width:21px;text-align:right">21</div><div style="position:absolute;left:0;top:160px;width:21px;text-align:right">22</div><div style="position:absolute;left:0;top:180px;width:21px;text-align:right">23</div><div style="position:absolute;left:0;top:200px;width:21px;text-align:right">24</div><div style="position:absolute;left:0;top:220px;width:21px;text-align:right">25</div><div style="position:absolute;left:0;top:240px;width:21px;text-align:right">26</div><div style="position:absolute;left:0;top:260px;width:21px;text-align:right">27</div><div style="position:absolute;left:0;top:280px;width:21px;text-align:right">28</div><div style="position:absolute;left:0;top:300px;width:21px;text-align:right">29</div><div style="position:absolute;left:0;top:320px;width:21px;text-align:right">30</div><div style="position:absolute;left:0;top:340px;width:21px;text-align:right">31</div><div style="position:absolute;left:0;top:360px;width:21px;text-align:right">32</div><div style="position:absolute;left:0;top:380px;width:21px;text-align:right">33</div><div style="position:absolute;left:0;top:400px;width:21px;text-align:right">34</div><div style="position:absolute;left:0;top:420px;width:21px;text-align:right">35</div><div style="position:absolute;left:0;top:440px;width:21px;text-align:right">36</div><div style="position:absolute;left:0;top:460px;width:21px;text-align:right">37</div><div style="position:absolute;left:0;top:480px;width:21px;text-align:right">38</div></div><div class="code" style="left:485px;top:77px;width:1342px;height:500px"><div style="position:absolute;left:0;top:0px;height:20px">    <span style="color:#808000">@Override</span></div><div style="position:absolute;left:0;top:20px;height:20px">    <span style="color:#000080;font-weight:bold">protected</span> <span style="color:#000080;font-weight:bold">void</span> onCreate(Bundle savedInstanceState) {</div><div style="position:absolute;left:0;top:40px;height:20px">        <span style="color:#000080;font-weight:bold">super</span>.onCreate(savedInstanceState);</div><div style="position:absolute;left:0;top:60px;height:20px">        setContentView(R.layout.<span style="color:#660e7a;font-style:italic">activity_new_task</span>);</div><div style="position:absolute;left:0;top:80px;height:20px"></div><div style="position:absolute;left:0;top:100px;height:20px">        <span style="color:#660e7a;font-weight:bold">bSave</span> = (<span style="color:#808080">Button</span>) findViewById(R.id.<span style="color:#660e7a;font-style:italic">button_save</span>);</div><div style="position:absolute;left:0;top:120px;height:20px">        <span style="color:#660e7a;font-weight:bold">bSave</span>.setOnClickListener((<span style="color:#808080">View.OnClickListener</span>) <span style="color:#000080;font-weight:bold">this</span>);</div><div style="position:absolute;left:0;top:140px;height:20px">    }</div><div style="position:absolute;left:0;top:160px;height:20px"></div><div style="position:absolute;left:0;top:180px;height:20px">    <span style="color:#808000">@Override</span></div><div style="position:absolute;left:0;top:200px;height:20px">    <span style="color:#000080;font-weight:bold">public</span> <span style="color:#000080;font-weight:bold">void</span> onClick(View v) {</div><div style="position:absolute;left:0;top:220px;height:20px">        <span style="color:#000080;font-weight:bold">switch</span> (v.getId()) {</div><div style="position:absolute;left:0;top:240px;height:20px"></div><div style="position:absolute;left:0;top:260px;height:20px">            <span style="color:#000080;font-weight:bold">case</span> R.id.<span style="color:#660e7a;font-style:italic">button_save</span>: {</div><div style="position:absolute;left:0;top:280px;height:20px"></div><div style="position:absolute;left:0;top:300px;height:20px">                startActivity(taskActivity);</div><div style="position:absolute;left:0;top:320px;height:20px">                <span style="color:#000080;font-weight:bold">break</span>;</div><div style="position:absolute;left:0;top:340px;height:20px">            }</div><div style="position:absolute;left:0;top:360px;height:20px">            <span style="color:#000080;font-weight:bold">default</span>: {</div><div style="position:absolute;left:0;top:380px;height:20px">                <span style="color:#000080;font-weight:bold">break</span>;</div><div style="position:absolute;left:0;top:400px;height:20px">            }</div><div style="position:absolute;left:0;top:420px;height:20px">        }</div><div style="position:absolute;left:0;top:440px;height:20px">    }</div><div style="position:absolute;left:0;top:460px;height:20px">}</div><div style="position:absolute;left:0;top:480px;height:20px"></div></div><div class="code" style="left:485px;top:357px">                Intent taskActivity = <span style="color:#000080;font-weight:bold">new</span> Intent(</div><div class="r" style="left:879px;top:357px;width:106px;height:16px;background:#efefef;border-radius:4px;"></div><div class="t" style="left:884px;top:354px;color:#7a7a7a;letter-spacing:0.398px;">packageContext:</div><div class="code" style="left:987px;top:357px">NewTask.<span style="color:#000080;font-weight:bold">this</span>, Tasks.class);</div><svg class="s" style="left:444px;top:99px;" width="16" height="13" viewBox="0 0 16 13"><circle cx="5" cy="5.3" r="5" fill="#7ccbe6"/><circle cx="5" cy="5.3" r="2" fill="none" stroke="#3d3d3d" stroke-width="1.3"/><path d="M12 14 V3" stroke="#e05555" stroke-width="1.3"/><path d="M9.3 4.3 L12 -1 L14.7 4.3 Z" fill="#e05555"/></svg><svg class="s" style="left:444px;top:279px;" width="16" height="13" viewBox="0 0 16 13"><circle cx="5" cy="5.3" r="5" fill="#62b543"/><path d="M5 3 V7.5" stroke="#3d3d3d" stroke-width="1.3"/><path d="M12 14 V3" stroke="#e05555" stroke-width="1.3"/><path d="M9.3 4.3 L12 -1 L14.7 4.3 Z" fill="#e05555"/></svg><svg class="s" style="left:473px;top:100px;" width="11" height="13" viewBox="0 0 11 13"><path d="M0.5 0.5 H10.5 V8 L5.5 12.3 L0.5 8 Z" fill="#fff" stroke="#c4c4c4"/><path d="M3 5.5 H8" stroke="#b8b8b8"/></svg><svg class="s" style="left:473px;top:280px;" width="11" height="13" viewBox="0 0 11 13"><path d="M0.5 0.5 H10.5 V8 L5.5 12.3 L0.5 8 Z" fill="#fff" stroke="#c4c4c4"/><path d="M3 5.5 H8" stroke="#b8b8b8"/></svg><svg class="s" style="left:473px;top:300px;" width="11" height="13" viewBox="0 0 11 13"><path d="M0.5 0.5 H10.5 V8 L5.5 12.3 L0.5 8 Z" fill="#fff" stroke="#c4c4c4"/><path d="M3 5.5 H8" stroke="#b8b8b8"/></svg><svg class="s" style="left:473px;top:340px;" width="11" height="13" viewBox="0 0 11 13"><path d="M0.5 0.5 H10.5 V8 L5.5 12.3 L0.5 8 Z" fill="#fff" stroke="#c4c4c4"/><path d="M3 5.5 H8" stroke="#b8b8b8"/></svg><svg class="s" style="left:473px;top:440px;" width="11" height="13" viewBox="0 0 11 13"><path d="M0.5 0.5 H10.5 V8 L5.5 12.3 L0.5 8 Z" fill="#fff" stroke="#c4c4c4"/><path d="M3 5.5 H8" stroke="#b8b8b8"/></svg><svg class="s" style="left:473px;top:218px;" width="11" height="13" viewBox="0 0 11 13"><path d="M0.5 12.5 H10.5 V5 L5.5 0.7 L0.5 5 Z" fill="#fff" stroke="#c4c4c4"/><path d="M3 7.5 H8" stroke="#b8b8b8"/></svg><svg class="s" style="left:473px;top:418px;" width="11" height="13" viewBox="0 0 11 13"><path d="M0.5 12.5 H10.5 V5 L5.5 0.7 L0.5 5 Z" fill="#fff" stroke="#c4c4c4"/><path d="M3 7.5 H8" stroke="#b8b8b8"/></svg><svg class="s" style="left:473px;top:478px;" width="11" height="13" viewBox="0 0 11 13"><path d="M0.5 12.5 H10.5 V5 L5.5 0.7 L0.5 5 Z" fill="#fff" stroke="#c4c4c4"/><path d="M3 7.5 H8" stroke="#b8b8b8"/></svg><svg class="s" style="left:473px;top:498px;" width="11" height="13" viewBox="0 0 11 13"><path d="M0.5 12.5 H10.5 V5 L5.5 0.7 L0.5 5 Z" fill="#fff" stroke="#c4c4c4"/><path d="M3 7.5 H8" stroke="#b8b8b8"/></svg><svg class="s" style="left:473px;top:518px;" width="11" height="13" viewBox="0 0 11 13"><path d="M0.5 12.5 H10.5 V5 L5.5 0.7 L0.5 5 Z" fill="#fff" stroke="#c4c4c4"/><path d="M3 7.5 H8" stroke="#b8b8b8"/></svg><div class="r" style="left:416px;top:635px;width:1411px;height:1px;background:#dadada;"></div><div class="r" style="left:416px;top:636px;width:1411px;height:22px;background:#efefef;"></div><div class="t" style="left:489px;top:638px;color:#4d4d4d;letter-spacing:-0.170px;">NewTask</div><svg class="s" style="left:547px;top:643px;" width="5" height="8" viewBox="0 0 5 8"><path d="M0.5 0.5 L4 4 L0.5 7.5" fill="none" stroke="#9a9a9a"/></svg><div class="t" style="left:560px;top:638px;color:#4d4d4d;letter-spacing:0.071px;">onClick()</div><div class="r" style="left:12px;top:658px;width:1815px;height:1px;background:#c9c9c9;"></div><div class="r" style="left:12px;top:659px;width:1815px;height:24px;background:#ededed;"></div><div class="r" style="left:12px;top:683px;width:1815px;height:1px;background:#c9c9c9;"></div><div class="t" style="left:19px;top:662px;color:#000;letter-spacing:-0.003px;">Build:</div><div class="r" style="left:56px;top:659px;width:106px;height:24px;background:#dadada;"></div><div class="t" style="left:68px;top:662px;color:#000;letter-spacing:0.165px;">Build Output</div><svg class="s" style="left:143px;top:669px;" width="8" height="8" viewBox="0 0 8 8"><path d="M0.5 0.5 L7.5 7.5 M7.5 0.5 L0.5 7.5" stroke="#b2b2b2" stroke-width="1.1"/></svg><div class="t" style="left:174px;top:662px;color:#000;letter-spacing:-0.293px;">Sync</div><svg class="s" style="left:206px;top:669px;" width="8" height="8" viewBox="0 0 8 8"><path d="M0.5 0.5 L7.5 7.5 M7.5 0.5 L0.5 7.5" stroke="#b2b2b2" stroke-width="1.1"/></svg><div class="r" style="left:12px;top:684px;width:1815px;height:201px;background:#ffffff;"></div><div class="r" style="left:12px;top:684px;width:28px;height:201px;background:#f2f2f2;"></div><div class="r" style="left:40px;top:684px;width:1px;height:201px;background:#d0d0d0;"></div><svg class="s" style="left:17px;top:691px;" width="17" height="16" viewBox="0 0 17 16"><path d="M1 5.5 L6.5 1 L9.5 3.5 L4 8 Z" fill="#59a869"/><path d="M6 3.5 L15.2 13.8" stroke="#59a869" stroke-width="2.8"/></svg><div class="r" style="left:16px;top:715px;width:20px;height:1px;background:#d0d0d0;"></div><svg class="s" style="left:19px;top:726px;" width="15" height="14" viewBox="0 0 15 14"><rect x="0" y="0" width="10" height="9" fill="#6e6e6e"/><rect x="3" y="3" width="12" height="11" fill="#f2f2f2"/><rect x="4" y="4" width="10" height="9.5" fill="#6e6e6e"/><path d="M7.5 6 L10 8.7 L7.5 11.4" fill="none" stroke="#f2f2f2" stroke-width="1.3"/></svg><div class="r" style="left:16px;top:748px;width:20px;height:1px;background:#d0d0d0;"></div><svg class="s" style="left:19px;top:758px;" width="15" height="14" viewBox="0 0 15 14"><path d="M0.5 13.5 L6 8" stroke="#6e6e6e" stroke-width="1.4"/><path d="M3.5 6 L8 2.5 L9 0 L14.5 5.5 L12 6.5 L8.5 11 Z" fill="#6e6e6e"/></svg><svg class="s" style="left:44px;top:689px;" width="9" height="8" viewBox="0 0 9 8"><path d="M0 0 H9 L4.5 8 Z" fill="#9c9c9c"/></svg><svg class="s" style="left:63px;top:686px;" width="13" height="11" viewBox="0 0 13 11"><path d="M1 5.5 L4.8 9.2 L12 1.5" fill="none" stroke="#62b543" stroke-width="2.4"/></svg><div class="t" style="left:81px;top:683px;color:#000;font-weight:bold;letter-spacing:-0.414px;">Build:</div><div class="t" style="left:115px;top:683px;color:#000;letter-spacing:-0.062px;">completed successfully</div><div class="t" style="left:241px;top:683px;color:#808080;letter-spacing:-0.253px;">at 05/11/2019 22:25</div><svg class="s" style="left:62px;top:705px;" width="9" height="8" viewBox="0 0 9 8"><path d="M0 0 H9 L4.5 8 Z" fill="#9c9c9c"/></svg><svg class="s" style="left:81px;top:702px;" width="13" height="11" viewBox="0 0 13 11"><path d="M1 5.5 L4.8 9.2 L12 1.5" fill="none" stroke="#62b543" stroke-width="2.4"/></svg><div class="t" style="left:98px;top:699px;color:#000;letter-spacing:0.033px;">Run build</div><div class="t" style="left:152px;top:699px;color:#808080;letter-spacing:-0.002px;">C:\University Andi 3 Year\CET343 Android Mobile Development\uGotThis</div><svg class="s" style="left:82px;top:720px;" width="8" height="9" viewBox="0 0 8 9"><path d="M0 0 L8 4.5 L0 9 Z" fill="#9c9c9c"/></svg><svg class="s" style="left:99px;top:718px;" width="13" height="11" viewBox="0 0 13 11"><path d="M1 5.5 L4.8 9.2 L12 1.5" fill="none" stroke="#62b543" stroke-width="2.4"/></svg><div class="t" style="left:116px;top:715px;color:#000;letter-spacing:0.062px;">Load build</div><svg class="s" style="left:82px;top:736px;" width="8" height="9" viewBox="0 0 8 9"><path d="M0 0 L8 4.5 L0 9 Z" fill="#9c9c9c"/></svg><svg class="s" style="left:99px;top:734px;" width="13" height="11" viewBox="0 0 13 11"><path d="M1 5.5 L4.8 9.2 L12 1.5" fill="none" stroke="#62b543" stroke-width="2.4"/></svg><div class="t" style="left:116px;top:731px;color:#000;letter-spacing:0.185px;">Configure build</div><svg class="s" style="left:99px;top:750px;" width="13" height="11" viewBox="0 0 13 11"><path d="M1 5.5 L4.8 9.2 L12 1.5" fill="none" stroke="#62b543" stroke-width="2.4"/></svg><div class="t" style="left:116px;top:747px;color:#000;letter-spacing:-0.094px;">Calculate task graph</div><svg class="s" style="left:82px;top:768px;" width="8" height="9" viewBox="0 0 8 9"><path d="M0 0 L8 4.5 L0 9 Z" fill="#9c9c9c"/></svg><svg class="s" style="left:99px;top:766px;" width="13" height="11" viewBox="0 0 13 11"><path d="M1 5.5 L4.8 9.2 L12 1.5" fill="none" stroke="#62b543" stroke-width="2.4"/></svg><div class="t" style="left:116px;top:763px;color:#000;letter-spacing:-0.316px;">Run tasks</div><div class="r" style="left:1087px;top:111px;width:626px;height:486px;background:#f2f2f2;border:1px solid #1c85d8;box-shadow:0 4px 16px 2px rgba(0,0,0,0.24)"></div><div class="r" style="left:1088px;top:112px;width:624px;height:30px;background:#ffffff;"></div><svg class="s" style="left:1096px;top:121px;" width="16" height="9" viewBox="0 0 16 9"><path d="M0.3 9 A7.7 7.2 0 0 1 15.7 9 Z" fill="#8fc04f"/><path d="M0.8 -0.2 L3.3 3 M15.2 -0.2 L12.7 3" stroke="#8fc04f" stroke-width="1"/><circle cx="4.6" cy="5.8" r="0.8" fill="#fff"/><circle cx="11.4" cy="5.8" r="0.8" fill="#fff"/></svg><div class="t" style="left:1117px;top:117px;color:#000;letter-spacing:-0.090px;">Select Deployment Target</div><svg class="s" style="left:1691px;top:120px;" width="12" height="12" viewBox="0 0 12 12"><path d="M0.5 0.5 L11.5 11.5 M11.5 0.5 L0.5 11.5" stroke="#000" stroke-width="1.1"/></svg><div class="r" style="left:1100px;top:150px;width:600px;height:370px;background:#ffffff;border:1px solid #a9a9a9;"></div><div class="t" style="left:1101px;top:156px;color:#000;letter-spacing:-0.444px;">Connected Devices</div><div class="r" style="left:1204px;top:166px;width:491px;height:1px;background:#cfcfcf;"></div><div class="r" style="left:1101px;top:178px;width:598px;height:20px;background:#3875d7;"></div><svg class="s" style="left:1111px;top:180px;" width="11" height="16" viewBox="0 0 11 16"><rect x="0" y="0" width="11" height="16" rx="1.5" fill="#8c8c8c"/><rect x="2" y="2" width="7" height="10" fill="#9b62b8"/><rect x="4" y="13.5" width="3" height="1" fill="#222"/></svg><div class="t" style="left:1127px;top:179px;color:#ffffff;letter-spacing:-0.260px;">Pixel 3 API 23 (Android 6.0, API 23)</div><div class="r" style="left:1113px;top:523px;width:164px;height:24px;background:#ffffff;border:1px solid #adadad;border-radius:3px;"></div><div class="t" style="left:1128px;top:526px;color:#000;letter-spacing:-0.200px;">Create New Virtual Device</div><div class="r" style="left:1103px;top:566px;width:14px;height:14px;background:#ffffff;border:1px solid #4a4a4a;border-radius:2px;"></div><div class="t" style="left:1123px;top:564px;color:#000;letter-spacing:-0.116px;">Use same selection for future launches</div><div class="r" style="left:1457px;top:561px;width:72px;height:24px;background:#4a86c7;border:1px solid #3d74b4;border-radius:3px;"></div><div class="t" style="left:1485px;top:564px;color:#ffffff;font-weight:bold;letter-spacing:-0.500px;">OK</div><div class="r" style="left:1541px;top:561px;width:72px;height:24px;background:#ffffff;border:1px solid #adadad;border-radius:3px;"></div><div class="t" style="left:1559px;top:564px;color:#000;letter-spacing:-0.227px;">Cancel</div><div class="r" style="left:1625px;top:561px;width:72px;height:24px;background:#ffffff;border:1px solid #adadad;border-radius:3px;"></div><div class="t" style="left:1649px;top:564px;color:#000;letter-spacing:0.078px;">Help</div></body></html>
